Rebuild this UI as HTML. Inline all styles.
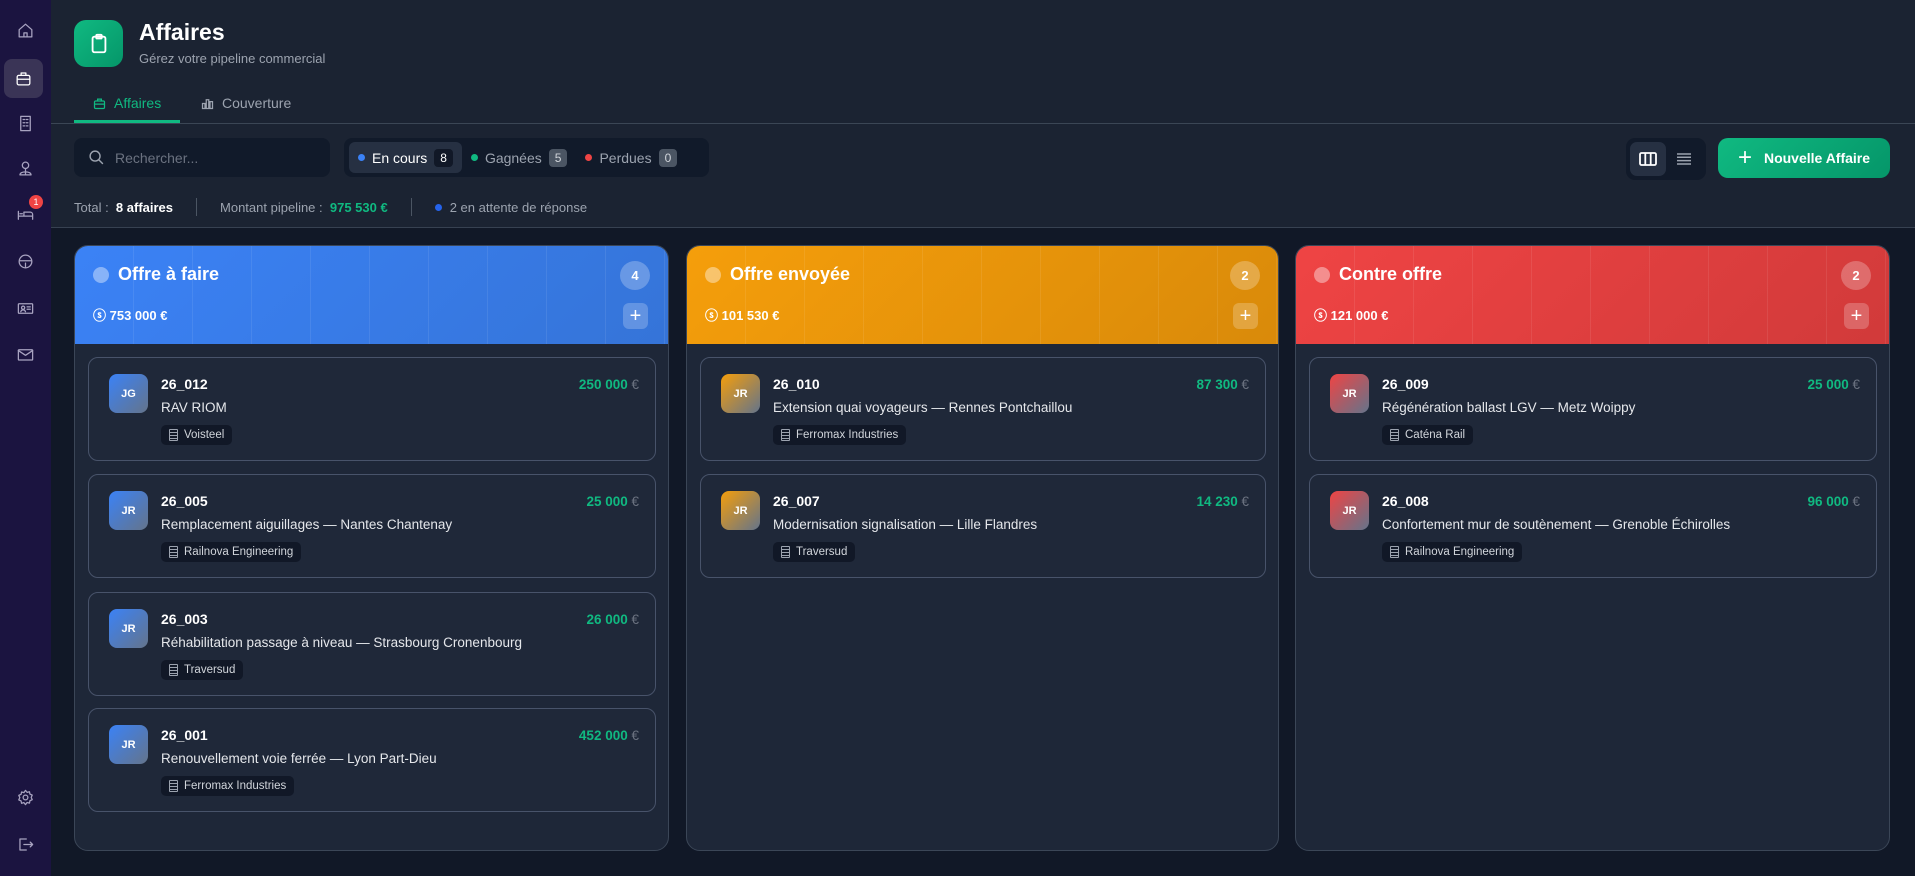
<!DOCTYPE html>
<html><head><meta charset="utf-8"><style>
*{box-sizing:border-box;margin:0;padding:0}
body{width:1915px;height:876px;overflow:hidden;background:#111827;font-family:"Liberation Sans","DejaVu Sans",sans-serif;color:#e5e7eb;position:relative}
.side{position:absolute;left:0;top:0;width:51px;height:876px;background:#1b1440}
.si{position:absolute;left:12px;width:27px;height:27px;display:flex;align-items:center;justify-content:center}
.si svg{width:19px;height:19px;stroke:#a8a3c0;fill:none;stroke-width:1.6;stroke-linecap:round;stroke-linejoin:round}
.act{left:4px;width:39px;height:39px;background:#3a3456;border-radius:8px}
.act svg{stroke:#fff}
.top{position:absolute;left:51px;top:0;right:0;height:228px;background:#1b2332;border-bottom:1px solid #374151}
.logo{position:absolute;left:74px;top:20px;width:49px;height:47px;border-radius:12px;background:linear-gradient(135deg,#10b981,#059669);display:flex;align-items:center;justify-content:center}
h1{position:absolute;left:139px;top:19px;font-size:23px;font-weight:bold;color:#fff}
.sub{position:absolute;left:139px;top:51px;font-size:13px;color:#9ca3af}
.tab{position:absolute;top:95px;font-size:14px;display:flex;align-items:center;gap:7px}
.hr{position:absolute;left:51px;right:0;top:123px;border-top:1px solid #3b4655}
.search{position:absolute;left:74px;top:138px;width:256px;height:39px;border-radius:8px;background:#111a2a;display:flex;align-items:center;padding-left:14px;gap:10px;color:#6b7280;font-size:14px}
.filters{position:absolute;left:344px;top:138px;width:365px;height:39px;border-radius:8px;background:#111a2a;display:flex;align-items:center;padding:0 5px;font-size:14px;color:#9ca3af}
.f{display:flex;align-items:center;gap:7px;height:31px;padding:0 9px;border-radius:6px}
.f.on{background:#263042;color:#fff}
.dot{width:7px;height:7px;border-radius:50%}
.cnt{font-size:12px;padding:2px 6px;border-radius:4px;background:#4b5563;color:#d1d5db}
.f.on .cnt{background:#111827;color:#fff}
.tog{position:absolute;left:1626px;top:138px;width:80px;height:42px;border-radius:9px;background:#111a2a;padding:4px}
.tog div{position:absolute;top:4px;width:36px;height:34px;border-radius:7px;display:flex;align-items:center;justify-content:center}
.btn{position:absolute;left:1718px;top:138px;width:172px;height:40px;border-radius:10px;background:linear-gradient(135deg,#10b981,#059669);color:#fff;font-weight:bold;font-size:14px;display:flex;align-items:center;justify-content:center;gap:12px}
.stats{position:absolute;left:74px;top:198px;font-size:13px;color:#9ca3af;display:flex;align-items:center}
.sep{width:1px;height:18px;background:#4b5563;margin:0 23px}
.col{position:absolute;top:245px;width:595px;height:606px;border-radius:14px;background:#1e2738;border:1px solid #3b4657;overflow:hidden}
.ch{height:98px;position:relative;color:#fff}
.ch::after{content:"";position:absolute;inset:0;background:repeating-linear-gradient(90deg,transparent 0 58px,rgba(255,255,255,.08) 58px 59px)}
.ct{position:absolute;left:18px;top:18px;font-size:18px;font-weight:bold;display:flex;align-items:center;gap:9px}
.ct i{width:16px;height:16px;border-radius:50%;background:rgba(255,255,255,.4)}
.ca{position:absolute;left:18px;top:59px;font-size:13px;font-weight:bold;display:flex;align-items:center;gap:9px}
.bd{position:absolute;right:18px;top:15px;width:30px;height:29px;border-radius:50%;background:rgba(255,255,255,.25);font-size:13px;font-weight:bold;display:flex;align-items:center;justify-content:center;z-index:1}
.pl{position:absolute;right:20px;top:57px;width:25px;height:26px;border-radius:6px;background:rgba(255,255,255,.22);font-size:20px;display:flex;align-items:center;justify-content:center;z-index:1}
.card{position:absolute;left:13px;width:568px;height:104px;border-radius:10px;border:1px solid #48536a;background:#1f2839}
.av{position:absolute;left:20px;top:16px;width:39px;height:39px;border-radius:8px;font-size:11px;font-weight:bold;color:#fff;display:flex;align-items:center;justify-content:center}
.id{position:absolute;left:72px;top:18px;font-size:14px;font-weight:bold;color:#fff}
.tt{position:absolute;left:72px;top:42px;font-size:13.5px;color:#e5e7eb}
.tag{position:absolute;left:72px;top:67px;height:20px;border-radius:5px;background:#111827;font-size:11.5px;color:#d1d5db;padding:0 8px;display:flex;align-items:center;gap:6px}
.tag::before{content:"";width:7px;height:10px;border:1px solid #9ca3af;border-radius:1px;background:repeating-linear-gradient(180deg,transparent 0 2px,#9ca3af 2px 3px)}
.amt{position:absolute;right:16px;top:19px;font-size:13.5px;font-weight:bold;color:#10b981}
.amt span{color:#6b7280;font-weight:normal}
</style></head><body>
<div class="side">
 <div class="si" style="top:17px"><svg viewBox="0 0 24 24"><path d="M4 11l8-7 8 7v9H4z M10 20v-5h4v5"/></svg></div>
 <div class="si act" style="top:59px"><svg viewBox="0 0 24 24"><rect x="4" y="8" width="16" height="12" rx="2"/><path d="M9 8V5h6v3M4 13h16"/></svg></div>
 <div class="si" style="top:110px"><svg viewBox="0 0 24 24"><rect x="6" y="3" width="12" height="18"/><path d="M9 7h2M13 7h2M9 11h2M13 11h2M9 15h2M13 15h2"/></svg></div>
 <div class="si" style="top:155px"><svg viewBox="0 0 24 24"><circle cx="12" cy="8" r="4"/><path d="M5 20c0-5 14-5 14 0zM12 12v8"/></svg></div>
 <div class="si" style="top:201px"><svg viewBox="0 0 24 24"><path d="M3 18V8M3 14h18v4M21 14v-2a3 3 0 00-3-3h-8v5M5 11h3"/></svg><div style="position:absolute;left:17px;top:-6px;width:14px;height:14px;border-radius:50%;background:#ef4444;color:#fff;font-size:9px;display:flex;align-items:center;justify-content:center">1</div></div>
 <div class="si" style="top:248px"><svg viewBox="0 0 24 24"><circle cx="12" cy="12" r="8"/><path d="M4.5 11h15M12 14v5"/></svg></div>
 <div class="si" style="top:295px"><svg viewBox="0 0 24 24"><rect x="3" y="6" width="18" height="12" rx="1"/><circle cx="9" cy="11" r="2"/><path d="M6 16c1-3 5-3 6 0M14 10h4M14 13h4"/></svg></div>
 <div class="si" style="top:341px"><svg viewBox="0 0 24 24"><rect x="3" y="6" width="18" height="13" rx="1"/><path d="M3 7l9 6 9-6"/></svg></div>
 <div class="si" style="top:784px"><svg viewBox="0 0 24 24"><circle cx="12" cy="12" r="3"/><path d="M12 3l2 2.5 3-.8.6 3 2.9 1.3-1.3 2.9 1.3 2.9-2.9 1.3-.6 3-3-.8L12 21l-2-2.5-3 .8-.6-3L3.5 15l1.3-2.9L3.5 9.3l2.9-1.3.6-3 3 .8z"/></svg></div>
 <div class="si" style="top:831px"><svg viewBox="0 0 24 24"><path d="M13 5H5v14h8M10 12h11M18 9l3 3-3 3"/></svg></div>
</div>
<div class="top">
</div>
<div class="logo"><svg width="22" height="24" viewBox="0 0 24 24" fill="none" stroke="#fff" stroke-width="2" stroke-linejoin="round"><rect x="5" y="4" width="14" height="17" rx="2"/><rect x="9" y="2" width="6" height="4" rx="1"/></svg></div>
<h1>Affaires</h1>
<div class="sub">Gérez votre pipeline commercial</div>
<div class="tab" style="left:92px;color:#10b981"><svg width="15" height="15" viewBox="0 0 24 24" fill="none" stroke="#10b981" stroke-width="2"><rect x="4" y="8" width="16" height="12" rx="2"/><path d="M9 8V5h6v3M4 13h16"/></svg>Affaires</div>
<div style="position:absolute;left:74px;top:120px;width:106px;height:3px;background:#10b981;z-index:2"></div>
<div class="tab" style="left:200px;color:#9ca3af"><svg width="15" height="15" viewBox="0 0 24 24" fill="none" stroke="#9ca3af" stroke-width="2"><path d="M4 20V12h4v8M10 20V6h4v14M16 20V9h4v11M3 20h18"/></svg>Couverture</div>
<div class="hr"></div>
<div class="search"><svg width="17" height="17" viewBox="0 0 24 24" fill="none" stroke="#9ca3af" stroke-width="2"><circle cx="10" cy="10" r="7"/><path d="M15 15l6 6"/></svg>Rechercher...</div>
<div class="filters"><div class="f on"><i class="dot" style="background:#3b82f6"></i>En cours <span class="cnt">8</span></div><div class="f"><i class="dot" style="background:#10b981"></i>Gagnées <span class="cnt">5</span></div><div class="f"><i class="dot" style="background:#ef4444"></i>Perdues <span class="cnt">0</span></div></div>
<div class="tog"><div style="left:4px;background:#263042"><svg width="18" height="16" viewBox="0 0 18 16" fill="none" stroke="#fff" stroke-width="1.8"><rect x="1" y="2" width="16" height="12" rx="1.5"/><path d="M6.3 2v12M11.7 2v12"/></svg></div><div style="left:40px"><svg width="16" height="14" viewBox="0 0 16 14" stroke="#9ca3af" stroke-width="1.5"><path d="M1 2h14M1 5.3h14M1 8.6h14M1 12h14"/></svg></div></div>
<div class="btn"><span style="font-size:24px;font-weight:normal;line-height:1">+</span>Nouvelle Affaire</div>
<div class="stats">Total :&nbsp;&nbsp;<b style="color:#fff">8 affaires</b><span class="sep"></span>Montant pipeline :&nbsp;&nbsp;<b style="color:#10b981">975 530 €</b><span class="sep"></span><i class="dot" style="background:#2563eb;margin-right:8px"></i>2 en attente de réponse</div>

<div class="col" style="left:74px">
 <div class="ch" style="background:linear-gradient(135deg,#3b82f6,#3574d8)"><div class="ct"><i></i>Offre à faire</div><div class="ca">ⓢ 753 000 €</div><div class="bd">4</div><div class="pl">+</div></div>
 <div class="card" style="top:111px"><div class="av" style="background:linear-gradient(135deg,#3b82f6,#64748b)">JG</div><div class="id">26_012</div><div class="tt">RAV RIOM</div><div class="tag">Voisteel</div><div class="amt">250 000 <span>€</span></div></div>
 <div class="card" style="top:228px"><div class="av" style="background:linear-gradient(135deg,#3b82f6,#64748b)">JR</div><div class="id">26_005</div><div class="tt">Remplacement aiguillages — Nantes Chantenay</div><div class="tag">Railnova Engineering</div><div class="amt">25 000 <span>€</span></div></div>
 <div class="card" style="top:346px"><div class="av" style="background:linear-gradient(135deg,#3b82f6,#64748b)">JR</div><div class="id">26_003</div><div class="tt">Réhabilitation passage à niveau — Strasbourg Cronenbourg</div><div class="tag">Traversud</div><div class="amt">26 000 <span>€</span></div></div>
 <div class="card" style="top:462px"><div class="av" style="background:linear-gradient(135deg,#3b82f6,#64748b)">JR</div><div class="id">26_001</div><div class="tt">Renouvellement voie ferrée — Lyon Part-Dieu</div><div class="tag">Ferromax Industries</div><div class="amt">452 000 <span>€</span></div></div>
</div>
<div class="col" style="left:686px;width:593px">
 <div class="ch" style="background:linear-gradient(135deg,#f59e0b,#d98a0a)"><div class="ct"><i></i>Offre envoyée</div><div class="ca">ⓢ 101 530 €</div><div class="bd">2</div><div class="pl">+</div></div>
 <div class="card" style="top:111px;width:566px"><div class="av" style="background:linear-gradient(135deg,#f59e0b,#64748b)">JR</div><div class="id">26_010</div><div class="tt">Extension quai voyageurs — Rennes Pontchaillou</div><div class="tag">Ferromax Industries</div><div class="amt">87 300 <span>€</span></div></div>
 <div class="card" style="top:228px;width:566px"><div class="av" style="background:linear-gradient(135deg,#f59e0b,#64748b)">JR</div><div class="id">26_007</div><div class="tt">Modernisation signalisation — Lille Flandres</div><div class="tag">Traversud</div><div class="amt">14 230 <span>€</span></div></div>
</div>
<div class="col" style="left:1295px">
 <div class="ch" style="background:linear-gradient(135deg,#ef4444,#d13a3a)"><div class="ct"><i></i>Contre offre</div><div class="ca">ⓢ 121 000 €</div><div class="bd">2</div><div class="pl">+</div></div>
 <div class="card" style="top:111px"><div class="av" style="background:linear-gradient(135deg,#ef4444,#64748b)">JR</div><div class="id">26_009</div><div class="tt">Régénération ballast LGV — Metz Woippy</div><div class="tag">Caténa Rail</div><div class="amt">25 000 <span>€</span></div></div>
 <div class="card" style="top:228px"><div class="av" style="background:linear-gradient(135deg,#ef4444,#64748b)">JR</div><div class="id">26_008</div><div class="tt">Confortement mur de soutènement — Grenoble Échirolles</div><div class="tag">Railnova Engineering</div><div class="amt">96 000 <span>€</span></div></div>
</div>
</body></html>
